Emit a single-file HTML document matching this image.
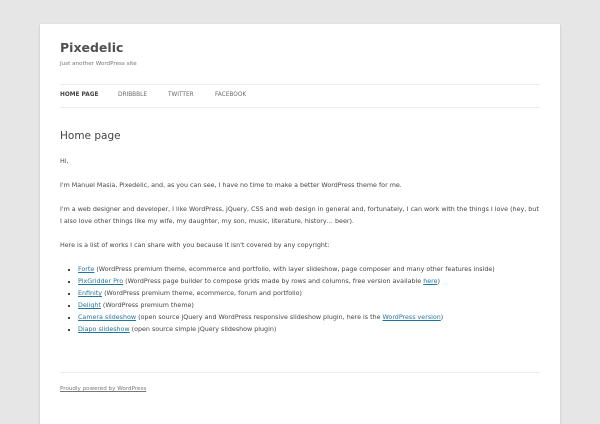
<!DOCTYPE html>
<html><head><meta charset="utf-8"><style>
html,body{margin:0;padding:0;background:#e6e6e6;width:600px;height:400px;overflow:hidden}
body{font-family:"DejaVu Sans","Liberation Sans",sans-serif;color:#444}
.page{position:absolute;left:40px;top:24px;width:520px;height:400px;background:#fff;box-shadow:0 1px 2px rgba(0,0,0,.2)}
.a{position:absolute;left:20px;white-space:nowrap}
h1{margin:0;font-size:12.5px;font-weight:bold;color:#515151}
.tag{font-size:5.6px;color:#757575}
.nav{left:20px;right:20px;top:60px;height:22px;border-top:1px solid #ededed;border-bottom:1px solid #ededed;position:absolute}
.nav span{position:absolute;top:7px;font-size:5.8px;color:#6a6a6a}
.t{font-size:6.35px;line-height:12px;color:#444}
a{color:#21759b;text-decoration:underline}
ul{margin:0;padding:0 0 0 18px;list-style:square}
li{font-size:6.35px;line-height:12px}
</style></head><body>
<div class="page">
<div class="a" style="top:16px"><h1>Pixedelic</h1></div>
<div class="a tag" style="top:37px">Just another WordPress site</div>
<div class="nav">
<span style="left:0;font-weight:bold;color:#444">HOME PAGE</span>
<span style="left:58px">DRIBBBLE</span>
<span style="left:108px">TWITTER</span>
<span style="left:155px">FACEBOOK</span>
</div>
<div class="a" style="top:106px;font-size:10.5px;color:#444">Home page</div>
<div class="a t" style="top:132px">Hi,</div>
<div class="a t" style="top:156px">I'm Manuel Masia, Pixedelic, and, as you can see, I have no time to make a better WordPress theme for me.</div>
<div class="a t" style="top:180px">I'm a web designer and developer, I like WordPress, jQuery, CSS and web design in general and, fortunately, I can work with the things I love (hey, but<br>I also love other things like my wife, my daughter, my son, music, literature, history… beer).</div>
<div class="a t" style="top:216px">Here is a list of works I can share with you because it isn't covered by any copyright:</div>
<div class="a" style="top:240px">
<ul>
<li><a>Forte</a> (WordPress premium theme, ecommerce and portfolio, with layer slideshow, page composer and many other features inside)</li>
<li><a>PixGridder Pro</a> (WordPress page builder to compose grids made by rows and columns, free version available <a>here</a>)</li>
<li><a>Enfinity</a> (WordPress premium theme, ecommerce, forum and portfolio)</li>
<li><a>Delight</a> (WordPress premium theme)</li>
<li><a>Camera slideshow</a> (open source jQuery and WordPress responsive slideshow plugin, here is the <a>WordPress version</a>)</li>
<li><a>Diapo slideshow</a> (open source simple jQuery slideshow plugin)</li>
</ul></div>
<div style="position:absolute;left:20px;right:20px;top:348px;border-top:1px solid #ededed"></div>
<div class="a" style="top:362px;font-size:5.6px;color:#777;text-decoration:underline">Proudly powered by WordPress</div>
</div>
</body></html>
